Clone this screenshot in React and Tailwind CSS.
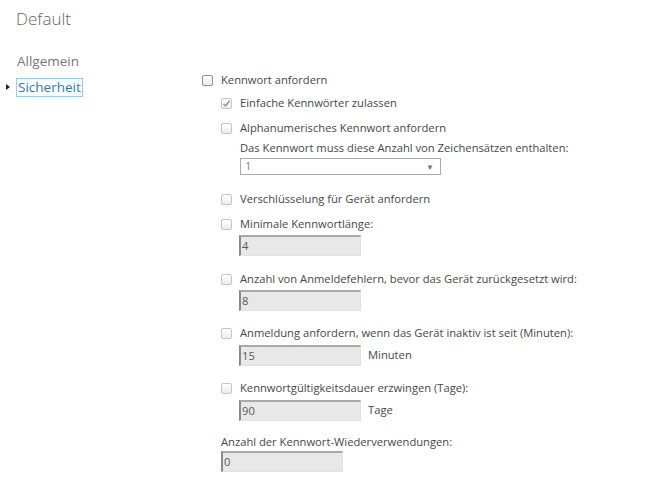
import { useState } from 'react'

const font = { fontFamily: '"Open Sans", "Noto Sans", sans-serif' }

function Box({ checked, strong }) {
  return (
    <span
      className={`relative inline-flex h-[11px] w-[11px] shrink-0 items-center justify-center rounded-[2px] border bg-gradient-to-b from-white to-[#ececec] ${
        strong ? 'border-[#8f8f8f]' : 'border-[#c6c6c6]'
      }`}
    >
      {checked && (
        <svg width="9" height="9" viewBox="0 0 9 9" className="absolute">
          <path d="M1.5 4.8 L3.6 6.8 L7.6 1.8" fill="none" stroke="#9a9a9a" strokeWidth="1.6" />
        </svg>
      )}
    </span>
  )
}

function Check({ label, checked, strong, className = '' }) {
  return (
    <div className={`flex h-[18px] items-center gap-[8px] ${className}`}>
      <Box checked={checked} strong={strong} />
      <span className="whitespace-nowrap text-[11.2px] text-[#474747]">{label}</span>
    </div>
  )
}

function Field({ value, unit, className = '' }) {
  return (
    <div className={`flex items-center ${className}`}>
      <div className="flex h-[21px] w-[122px] items-center border-t-2 border-l-2 border-r border-b border-t-[#a9a9a9] border-l-[#8a8a8a] border-r-[#e2e2e2] border-b-[#e2e2e2] bg-[#e8e8e8] pl-[1px] text-[11.2px] text-[#5a5a5a]">
        {value}
      </div>
      {unit && <span className="ml-[7px] text-[11.2px] text-[#474747]">{unit}</span>}
    </div>
  )
}

export default function App() {
  const [section] = useState('Sicherheit')

  return (
    <div className="h-[480px] w-[659px] bg-white" style={font}>
      <div className="pl-[16px] pt-[4px] text-[17px] font-light leading-[30px] text-[#666]">Default</div>

      <div className="mt-[10px] flex">
        <nav className="w-[202px] shrink-0 pt-[8px]">
          <div className="flex h-[18px] items-center pl-[17px] text-[13.5px] text-[#777]">Allgemein</div>
          <div className="mt-[8px] flex h-[18px] items-center">
            <span className="ml-[6px] h-0 w-0 border-y-[3px] border-l-[4px] border-y-transparent border-l-[#222]" />
            <span
              className={`ml-[6px] flex h-[19px] items-center border px-[1px] text-[13.5px] ${
                section === 'Sicherheit' ? 'border-[#9fcbea] text-[#2a7ab8]' : 'border-transparent'
              }`}
            >
              Sicherheit
            </span>
          </div>
        </nav>

        <main className="pt-[27px]">
          <Check label="Kennwort anfordern" strong />

          <div className="pl-[19px]">
            <Check label="Einfache Kennwörter zulassen" checked className="mt-[5px]" />
            <Check label="Alphanumerisches Kennwort anfordern" className="mt-[7px]" />
            <div className="pl-[19px]">
              <div className="mt-[2px] flex h-[18px] items-center whitespace-nowrap text-[11.2px] text-[#474747]">
                Das Kennwort muss diese Anzahl von Zeichensätzen enthalten:
              </div>
              <div className="mt-[1px] flex h-[17px] w-[201px] items-center justify-between border border-[#ababab] bg-white pl-[4px] pr-[6px] text-[11.2px] text-[#888]">
                <span>1</span>
                <span className="text-[8px] text-[#777]">▼</span>
              </div>
            </div>

            <Check label="Verschlüsselung für Gerät anfordern" className="mt-[15px]" />

            <Check label="Minimale Kennwortlänge:" className="mt-[7px]" />
            <Field value="4" className="mt-[2px] pl-[18px]" />

            <Check label="Anzahl von Anmeldefehlern, bevor das Gerät zurückgesetzt wird:" className="mt-[14px]" />
            <Field value="8" className="mt-[2px] pl-[18px]" />

            <Check label="Anmeldung anfordern, wenn das Gerät inaktiv ist seit (Minuten):" className="mt-[13px]" />
            <Field value="15" unit="Minuten" className="mt-[3px] pl-[18px]" />

            <Check label="Kennwortgültigkeitsdauer erzwingen (Tage):" className="mt-[13px]" />
            <Field value="90" unit="Tage" className="mt-[3px] pl-[18px]" />

            <div className="mt-[12px] flex h-[18px] items-center whitespace-nowrap text-[11.2px] text-[#474747]">
              Anzahl der Kennwort-Wiederverwendungen:
            </div>
            <Field value="0" className="mt-[0px]" />
          </div>
        </main>
      </div>
    </div>
  )
}
